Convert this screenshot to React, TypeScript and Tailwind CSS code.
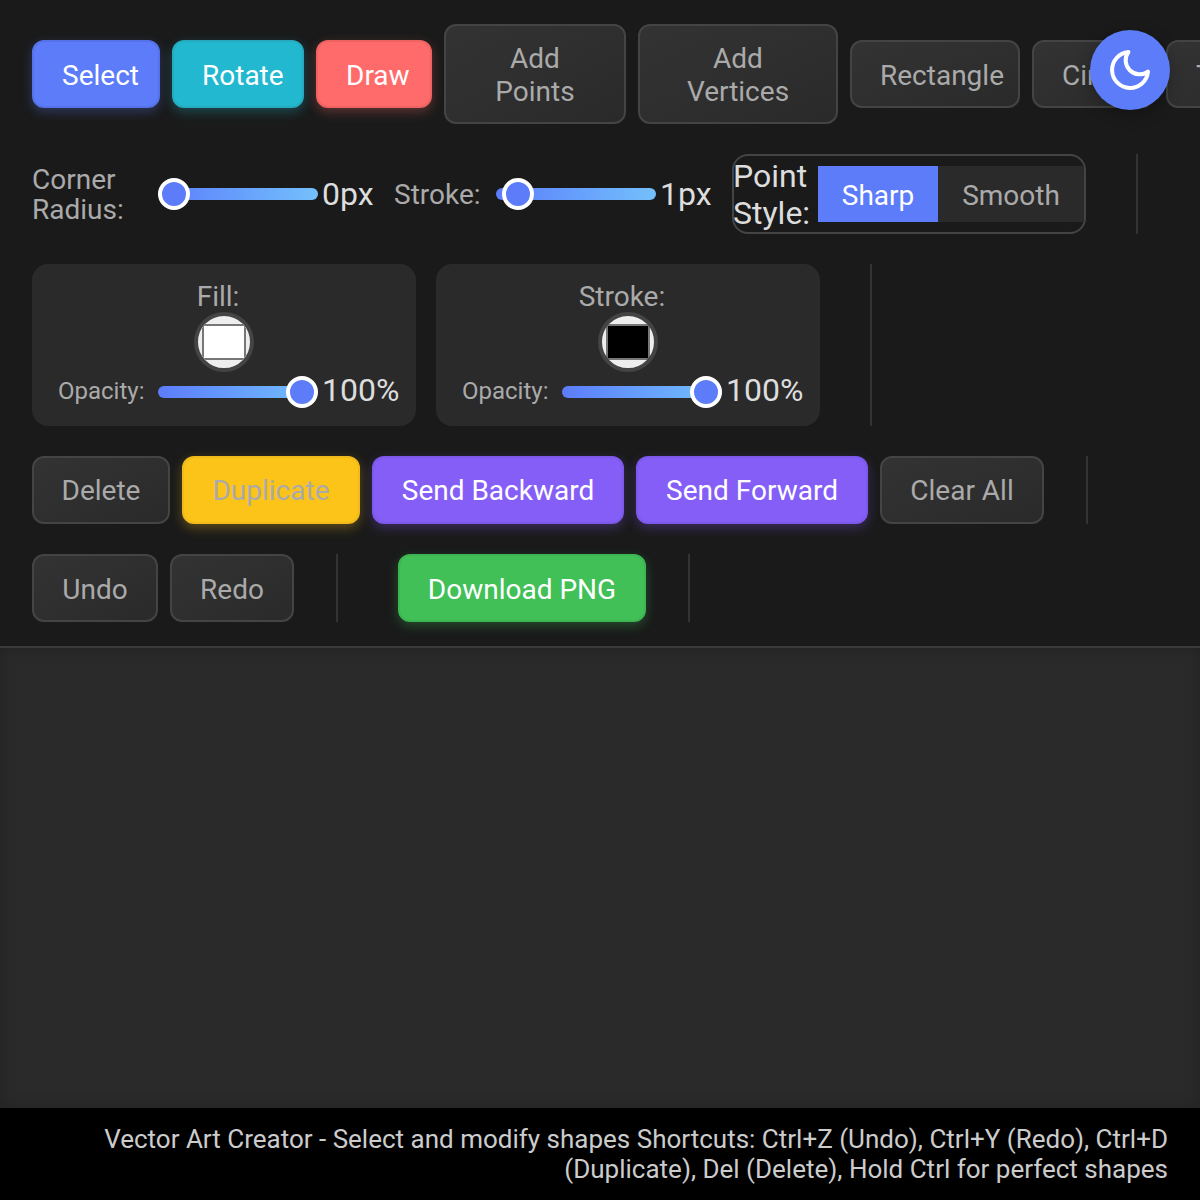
import { ReactNode } from 'react';

const plainBtn =
  'h-[68px] shrink-0 rounded-xl border-2 border-[#444444] bg-gradient-to-br from-[#333333] to-[#2a2a2a] text-[28px] text-[#aaaaaa] whitespace-nowrap';

function Separator({ className }: { className: string }) {
  return <div className={`w-0.5 shrink-0 self-stretch bg-[#333333] ${className}`} />;
}

function Slider({ thumb, width }: { thumb: string; width: string }) {
  return (
    <div className={`relative h-3 shrink-0 rounded-md bg-gradient-to-r from-[#5c7cfa] to-[#74c0fc] ${width}`}>
      <div className={`absolute top-[-10px] h-8 w-8 rounded-full border-4 border-white bg-[#5c7cfa] ${thumb}`} />
    </div>
  );
}

function ColorCard({ label, swatch }: { label: string; swatch: string }) {
  return (
    <div className="flex h-[162px] w-[384px] shrink-0 flex-col items-center rounded-2xl bg-[#2a2a2a] pt-4">
      <div className="mr-3 h-[33px] text-[28px] leading-[33px] text-[#aaaaaa]">{label}</div>
      <div className="mt-[-1px] flex h-[60px] w-[60px] shrink-0 items-center justify-center overflow-hidden rounded-full border-4 border-[#444444] bg-[#eeeeee]">
        <div className={`h-9 w-11 shrink-0 border-2 border-[#777777] ${swatch}`} />
      </div>
      <div className="flex w-full items-center pl-[26px]">
        <span className="w-[100px] shrink-0 text-2xl text-[#aaaaaa]">Opacity:</span>
        <div className="mt-0.5 flex">
          <Slider width="w-40" thumb="left-[128px]" />
        </div>
        <span className="ml-1 text-[32px] leading-[37px] text-[#dddddd]">100%</span>
      </div>
    </div>
  );
}

function Row({ children, className }: { children: ReactNode; className: string }) {
  return <div className={`flex items-center ${className}`}>{children}</div>;
}

export default function App() {
  return (
    <div className="relative flex h-[1200px] w-[1200px] flex-col overflow-hidden bg-[#1a1a1a] font-['Roboto',sans-serif]">
      <div className="flex flex-col gap-[30px] border-b-2 border-[#3a3a3a] px-8 pt-6 pb-6">
        <Row className="h-[100px] gap-3">
          <button className="h-[68px] w-[128px] shrink-0 rounded-xl border-2 border-[#5672e8] bg-[#5c7cfa] pt-[3px] pl-7 text-left text-[28px] text-white shadow-[0_4px_12px_rgba(92,124,250,0.3)]">Select</button>
          <button className="h-[68px] w-[132px] shrink-0 rounded-xl border-2 border-[#25aabf] bg-[#22b8cf] pt-[3px] pl-7 text-left text-[28px] text-white shadow-[0_4px_12px_rgba(34,184,207,0.3)]">Rotate</button>
          <button className="h-[68px] w-[116px] shrink-0 rounded-xl border-2 border-[#ee6262] bg-[#ff6b6b] pt-[3px] pl-7 text-left text-[28px] text-white shadow-[0_4px_12px_rgba(255,107,107,0.3)]">Draw</button>
          <button className="h-[100px] w-[182px] shrink-0 rounded-xl border-2 border-[#444444] bg-gradient-to-br from-[#333333] to-[#2a2a2a] pt-0.5 text-center text-[28px] leading-[33px] text-[#aaaaaa]">Add<br />Points</button>
          <button className="h-[100px] w-[200px] shrink-0 rounded-xl border-2 border-[#444444] bg-gradient-to-br from-[#333333] to-[#2a2a2a] pt-0.5 text-center text-[28px] leading-[33px] text-[#aaaaaa]">Add<br />Vertices</button>
          <button className={`${plainBtn} w-[170px] pt-[3px] pl-7 text-left`}>Rectangle</button>
          <button className={`${plainBtn} w-[122px] pt-[3px] pl-7 text-left`}>Circle</button>
          <button className={`${plainBtn} w-[100px] pt-[3px] pl-7 text-left`}>Text</button>
        </Row>

        <Row className="h-20">
          <div className="w-[126px] shrink-0 pt-0.5 text-[28px] leading-[30px] text-[#aaaaaa]">Corner<br />Radius:</div>
          <Slider width="w-40" thumb="left-0" />
          <span className="ml-1 w-[72px] shrink-0 text-[32px] leading-[37px] text-[#dddddd]">0px</span>
          <span className="w-[102px] shrink-0 pt-0.5 text-[28px] text-[#aaaaaa]">Stroke:</span>
          <Slider width="w-40" thumb="left-[6px]" />
          <span className="ml-1 w-[72px] shrink-0 text-[32px] leading-[37px] text-[#dddddd]">1px</span>
          <div className="flex h-20 w-[354px] shrink-0 items-center overflow-hidden rounded-2xl border-2 border-[#444444]">
            <div className="ml-[-1px] w-[85px] shrink-0 pt-0.5 text-[32px] leading-[37px] text-[#dddddd]">Point<br />Style:</div>
            <div className="flex h-14 w-[120px] shrink-0 items-center justify-center bg-[#5c7cfa] pt-[3px] text-[28px] text-white">Sharp</div>
            <div className="flex h-14 w-[146px] shrink-0 items-center justify-center bg-[#2a2a2a] pt-[3px] text-[28px] text-[#aaaaaa]">Smooth</div>
          </div>
          <Separator className="ml-[50px]" />
        </Row>

        <Row className="h-[162px] gap-5">
          <ColorCard label="Fill:" swatch="bg-white" />
          <ColorCard label="Stroke:" swatch="bg-black" />
          <Separator className="ml-[30px]" />
        </Row>

        <Row className="h-[68px] gap-3">
          <button className={`${plainBtn} w-[138px] pt-0.5`}>Delete</button>
          <button className="h-[68px] w-[178px] shrink-0 rounded-xl border-2 border-[#f0ba1c] bg-[#fcc419] pt-0.5 text-[28px] text-[#aaaaaa] shadow-[0_4px_12px_rgba(252,196,25,0.3)]">Duplicate</button>
          <button className="h-[68px] w-[252px] shrink-0 rounded-xl border-2 border-[#7d59ea] bg-[#845ef7] pt-0.5 text-[28px] text-white shadow-[0_4px_12px_rgba(132,94,247,0.3)]">Send Backward</button>
          <button className="h-[68px] w-[232px] shrink-0 rounded-xl border-2 border-[#7d59ea] bg-[#845ef7] pt-0.5 text-[28px] text-white shadow-[0_4px_12px_rgba(132,94,247,0.3)]">Send Forward</button>
          <button className={`${plainBtn} w-[164px] pt-0.5`}>Clear All</button>
          <Separator className="ml-[30px]" />
        </Row>

        <Row className="h-[68px]">
          <button className={`${plainBtn} w-[126px] pt-[3px]`}>Undo</button>
          <button className={`${plainBtn} ml-3 w-[124px] pt-[3px]`}>Redo</button>
          <Separator className="ml-[42px]" />
          <button className="ml-[60px] h-[68px] w-[248px] shrink-0 rounded-xl border-2 border-[#3cb552] bg-[#40c057] pt-[3px] text-[28px] text-white shadow-[0_4px_12px_rgba(64,192,87,0.3)]">Download PNG</button>
          <Separator className="ml-[42px]" />
        </Row>
      </div>

      <div className="flex-1 bg-[#2a2a2a] shadow-[inset_0_0_16px_rgba(0,0,0,0.2)]" />

      <div className="bg-black px-8 py-4 text-right text-[26px] leading-[30px] text-[#cccccc]">
        Vector Art Creator - Select and modify shapes Shortcuts: Ctrl+Z (Undo), Ctrl+Y (Redo), Ctrl+D (Duplicate), Del (Delete), Hold Ctrl for perfect shapes
      </div>

      <button className="absolute left-[1090px] top-[30px] flex h-20 w-20 items-center justify-center rounded-full bg-[#5c7cfa] shadow-[0_4px_16px_rgba(0,0,0,0.3)]">
        <svg width="48" height="48" viewBox="0 0 24 24" fill="none" stroke="white" strokeWidth="2" strokeLinecap="round" strokeLinejoin="round">
          <path d="M21 12.79A9 9 0 1 1 11.21 3 7 7 0 0 0 21 12.79z" />
        </svg>
      </button>
    </div>
  );
}
